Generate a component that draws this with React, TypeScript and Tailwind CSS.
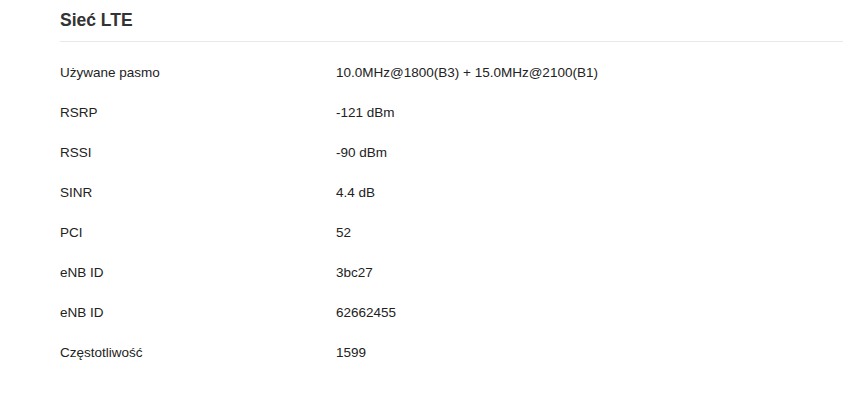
import React from "react";

const rows: [string, string][] = [
  ["Używane pasmo", "10.0MHz@1800(B3) + 15.0MHz@2100(B1)"],
  ["RSRP", "-121 dBm"],
  ["RSSI", "-90 dBm"],
  ["SINR", "4.4 dB"],
  ["PCI", "52"],
  ["eNB ID", "3bc27"],
  ["eNB ID", "62662455"],
  ["Częstotliwość", "1599"],
];

export default function App() {
  return (
    <div className="w-[843px] h-[400px] bg-white pl-[60px] font-['Liberation_Sans',Arial,sans-serif] text-[#222]">
      {/* Section header */}
      <div className="h-[42px] flex items-center border-b border-[#e8e8e8] text-[17.5px] font-bold text-[#333]">
        Sieć LTE
      </div>

      {/* Key / value rows */}
      <div className="pt-[11px]">
        {rows.map(([label, value], i) => (
          <div key={i} className="h-10 flex items-center text-[13.5px]">
            <span className="w-[276px] shrink-0">{label}</span>
            <span>{value}</span>
          </div>
        ))}
      </div>
    </div>
  );
}
